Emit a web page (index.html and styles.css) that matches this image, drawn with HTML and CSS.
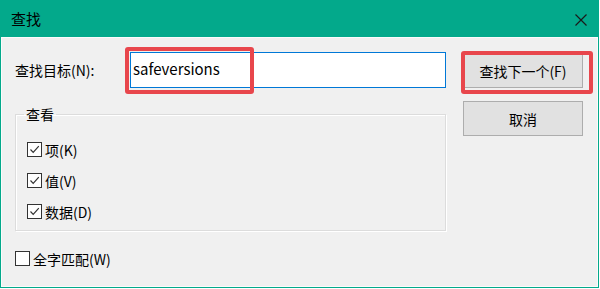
FILE: index.html
```html
<!DOCTYPE html>
<html lang="zh-CN">
<head>
    <meta charset="UTF-8">
    <title>查找</title>
    <link rel="stylesheet" href="styles.css">
</head>
<body>
<div class="window">
    <div class="titlebar">
        <span class="title">查找</span>
        <svg class="close" width="12" height="12" viewBox="0 0 12 12">
            <path d="M0.5 0.5 L11.5 11.5 M11.5 0.5 L0.5 11.5" stroke="#1a1a1a" stroke-width="1.2" fill="none"/>
        </svg>
    </div>
    <div class="content">
        <div class="left">
            <div class="find-row">
                <label class="find-label">查找目标(N):</label>
                <div class="input">safeversions</div>
            </div>
            <fieldset class="group">
                <legend>查看</legend>
                <div class="check">
                    <span class="box on"><svg width="13" height="13" viewBox="0 0 13 13"><polyline points="2.5,6.5 5.2,9.3 10.8,3.2" stroke="#333" stroke-width="1.2" fill="none"/></svg></span>
                    <span>项(K)</span>
                </div>
                <div class="check">
                    <span class="box on"><svg width="13" height="13" viewBox="0 0 13 13"><polyline points="2.5,6.5 5.2,9.3 10.8,3.2" stroke="#333" stroke-width="1.2" fill="none"/></svg></span>
                    <span>值(V)</span>
                </div>
                <div class="check">
                    <span class="box on"><svg width="13" height="13" viewBox="0 0 13 13"><polyline points="2.5,6.5 5.2,9.3 10.8,3.2" stroke="#333" stroke-width="1.2" fill="none"/></svg></span>
                    <span>数据(D)</span>
                </div>
            </fieldset>
            <div class="check whole">
                <span class="box"></span>
                <span>全字匹配(W)</span>
            </div>
        </div>
        <div class="right">
            <button class="btn">查找下一个(F)</button>
            <button class="btn">取消</button>
        </div>
    </div>
    <!-- 红框标注 -->
    <div class="mark mark-input"></div>
    <div class="mark mark-btn"></div>
</div>
</body>
</html>
```

FILE: styles.css
```css
*{
    padding: 0;
    margin: 0;
    box-sizing: border-box;
}
body{
    background: #fff;
    font-family: "Noto Sans CJK SC", "Noto Sans", sans-serif;
    font-size: 14px;
    color: #000;
}
.window{
    position: relative;
    width: 599px;
    height: 288px;
    border: 1px solid #03a98b;
    background: #f0f0f0;
    display: flex;
    flex-direction: column;
}
.titlebar{
    height: 36px;
    background: #03a98b;
    display: flex;
    align-items: center;
    justify-content: space-between;
    padding: 0 11px 0 10px;
}
.titlebar .title{
    font-size: 15px;
    line-height: 20px;
}
.titlebar .close{
    margin-top: 1px;
}
.content{
    flex: 1;
    display: flex;
    padding: 15px 0 0 14px;
    box-shadow: inset 1px 1px 0 #fbfbfb, inset -1px -1px 0 #fbfbfb;
}
.left{
    width: 431px;
}
.find-row{
    display: flex;
    align-items: center;
    height: 36px;
}
.find-label{
    width: 115px;
    line-height: 20px;
}
.input{
    width: 316px;
    height: 36px;
    border: 1px solid #0078d7;
    background: #fff;
    padding-left: 2px;
    font-size: 15px;
    line-height: 32px;
}
.group{
    margin-top: 16px;
    height: 127px;
    border: 1px solid #dcdcdc;
    box-shadow: 1px 1px 0 #fff, inset 1px 1px 0 #fff;
    padding: 10px 0 3px 11px;
}
.group legend{
    margin-left: -3px;
    padding: 0 2px;
    line-height: 20px;
}
.check{
    display: flex;
    align-items: center;
    height: 31px;
    line-height: 20px;
}
.check .box{
    width: 15px;
    height: 15px;
    border: 1px solid #333;
    background: #fff;
    margin-right: 3px;
    display: flex;
    align-items: center;
    justify-content: center;
}
.whole{
    margin-top: 12px;
}
.right{
    margin-left: 17px;
    padding-top: 1px;
    display: flex;
    flex-direction: column;
    gap: 13px;
}
.btn{
    width: 120px;
    height: 35px;
    border: 1px solid #adadad;
    background: #e1e1e1;
    font-family: inherit;
    font-size: 14px;
    color: #000;
}
.mark{
    position: absolute;
    border: 4px solid #e8464c;
    border-radius: 3px;
}
.mark-input{
    left: 124px;
    top: 46px;
    width: 129px;
    height: 47px;
}
.mark-btn{
    left: 460px;
    top: 50px;
    width: 132px;
    height: 43px;
}
```
